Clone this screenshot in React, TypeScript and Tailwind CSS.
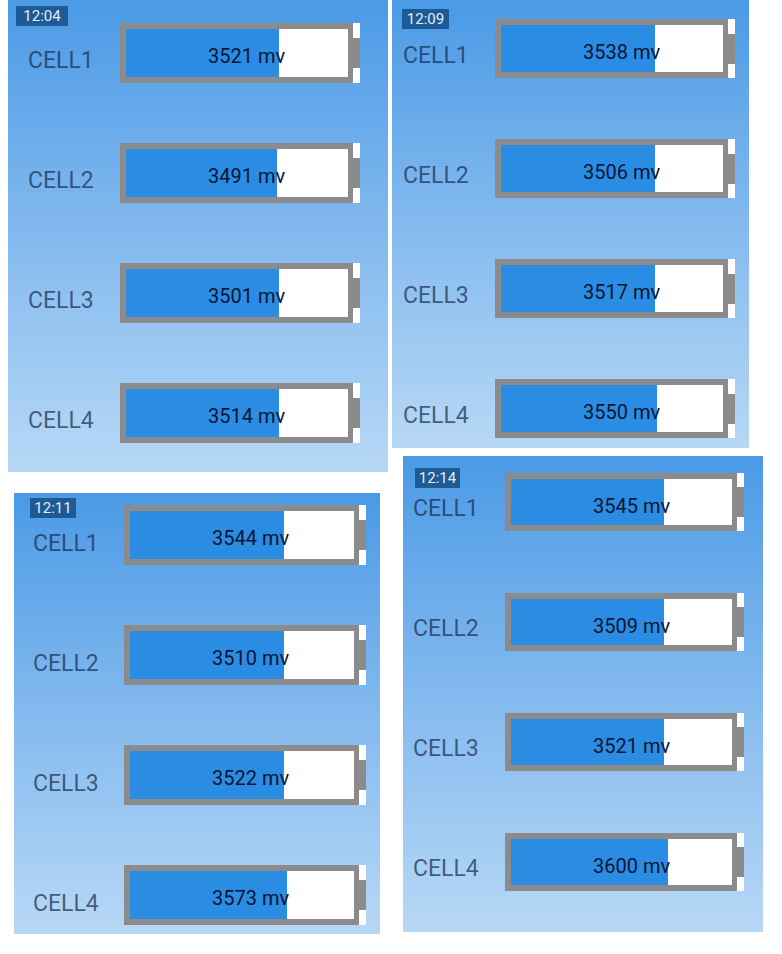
import React from 'react';

type Cell = { name: string; mv: number; fill: number };

type PanelProps = {
  time: string;
  className: string;
  badgeClass: string;
  labelClass: string;
  rowsClass: string;
  batteryClass: string;
  cells: Cell[];
};

const Battery: React.FC<{ cell: Cell; className: string }> = ({ cell, className }) => (
  <div className={`flex ${className}`}>
    <div className="flex-1 border-[6px] border-r-[5px] border-[#8b8b8b] bg-white">
      <div className="relative h-full">
        <div className="h-full bg-[#2a8ce2]" style={{ width: cell.fill }} />
        <span className="absolute left-[82px] top-[15px] whitespace-nowrap text-[20px] leading-[24px] text-[#0b1633]">
          {cell.mv} mv
        </span>
      </div>
    </div>
    <div className="flex w-[7px] items-center bg-white">
      <div className="h-[30px] w-full bg-[#8b8b8b]" />
    </div>
  </div>
);

const Panel: React.FC<PanelProps> = ({ time, className, badgeClass, labelClass, rowsClass, batteryClass, cells }) => (
  <div className={`relative bg-gradient-to-b from-[#4a9ae6] to-[#b7d8f5] ${className}`}>
    <div className={`absolute bg-[#1d5a96] text-center text-[15px] leading-[20px] text-[#e3eef8] ${badgeClass}`}>
      {time}
    </div>
    <div className={`flex flex-col ${rowsClass}`}>
      {cells.map((c) => (
        <div key={c.name} className="flex h-[120px] items-start">
          <div className={`text-[23px] leading-[26px] text-[#142846]/70 ${labelClass}`}>{c.name}</div>
          <Battery cell={c} className={batteryClass} />
        </div>
      ))}
    </div>
  </div>
);

const mk = (vals: [number, number][]): Cell[] =>
  vals.map(([mv, fill], i) => ({ name: `CELL${i + 1}`, mv, fill }));

export default function App() {
  return (
    <div className="flex h-[954px] w-[782px] overflow-hidden bg-white" style={{ fontFamily: 'Roboto, "Noto Sans", sans-serif' }}>
      <div className="flex w-[388px] flex-col">
        <Panel
          time="12:04"
          className="ml-[8px] h-[472px] w-[380px]"
          badgeClass="left-[8px] top-[6px] w-[52px]"
          labelClass="w-[112px] pl-[20px] pt-[25px]"
          rowsClass="pt-[23px]"
          batteryClass="h-[60px] w-[240px]"
          cells={mk([[3521, 153], [3491, 151], [3501, 153], [3514, 153]])}
        />
        <Panel
          time="12:11"
          className="ml-[14px] mt-[21px] h-[441px] w-[366px]"
          badgeClass="left-[16px] top-[5px] w-[46px]"
          labelClass="w-[110px] pl-[19px] pt-[26px]"
          rowsClass="pt-[12px]"
          batteryClass="h-[60px] w-[242px]"
          cells={mk([[3544, 154], [3510, 154], [3522, 154], [3573, 157]])}
        />
      </div>
      <div className="flex flex-col">
        <Panel
          time="12:09"
          className="ml-[4px] h-[448px] w-[357px]"
          badgeClass="left-[10px] top-[9px] w-[47px]"
          labelClass="w-[103px] pl-[11px] pt-[24px]"
          rowsClass="pt-[19px]"
          batteryClass="h-[59px] w-[240px]"
          cells={mk([[3538, 154], [3506, 154], [3517, 154], [3550, 156]])}
        />
        <Panel
          time="12:14"
          className="ml-[15px] mt-[8px] h-[476px] w-[360px]"
          badgeClass="left-[12px] top-[12px] w-[45px]"
          labelClass="w-[102px] pl-[10px] pt-[23px]"
          rowsClass="pt-[17px]"
          batteryClass="h-[58px] w-[239px]"
          cells={mk([[3545, 153], [3509, 153], [3521, 153], [3600, 157]])}
        />
      </div>
    </div>
  );
}
